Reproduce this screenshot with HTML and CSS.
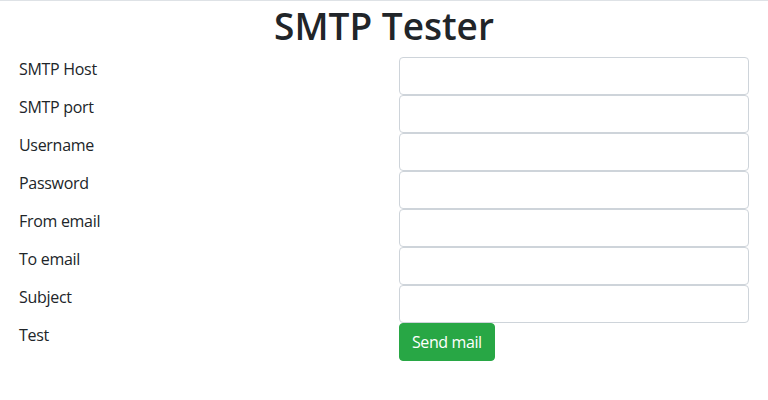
FILE: index.html
```html
<!DOCTYPE html>
<html lang="en">
<head>
<meta charset="utf-8">
<title>SMTP Tester</title>
<link rel="stylesheet" href="styles.css">
</head>
<body>
<div class="page">
  <h1 class="title">SMTP Tester</h1>
  <form class="form">
    <label class="label" for="host">SMTP Host</label>
    <input class="input" id="host" type="text">
    <label class="label" for="port">SMTP port</label>
    <input class="input" id="port" type="text">
    <label class="label" for="user">Username</label>
    <input class="input" id="user" type="text">
    <label class="label" for="pass">Password</label>
    <input class="input" id="pass" type="password">
    <label class="label" for="from">From email</label>
    <input class="input" id="from" type="text">
    <label class="label" for="to">To email</label>
    <input class="input" id="to" type="text">
    <label class="label" for="subj">Subject</label>
    <input class="input" id="subj" type="text">
    <span class="label">Test</span>
    <div><button class="btn" type="button">Send mail</button></div>
  </form>
</div>
</body>
</html>
```
FILE: styles.css
```css
html, body {
  margin: 0;
  padding: 0;
  background: #fff;
}
body {
  font-family: "Open Sans", "Noto Sans", sans-serif;
  font-size: 16px;
  line-height: 1.5;
  letter-spacing: -0.3px;
  color: #212529;
}
.page {
  border-top: 1px solid #dee2e6;
}
.title {
  margin: 0 0 8px;
  height: 48px;
  font-size: 37px;
  font-weight: 600;
  line-height: 50px;
  letter-spacing: 0;
  text-align: center;
}
.form {
  display: grid;
  grid-template-columns: 380px 350px;
  padding: 0 19px;
}
.label {
  display: block;
  line-height: 24px;
}
.input {
  box-sizing: border-box;
  display: block;
  width: 100%;
  height: 38px;
  margin: 0;
  padding: 6px 12px;
  font: inherit;
  color: #495057;
  background: #fff;
  border: 1px solid #ced4da;
  border-radius: 4px;
}
.btn {
  box-sizing: border-box;
  height: 38px;
  padding: 6px 12px;
  font: inherit;
  line-height: 24px;
  letter-spacing: -0.4px;
  color: #fff;
  background: #28a745;
  border: 1px solid #28a745;
  border-radius: 4px;
  cursor: pointer;
}
```
